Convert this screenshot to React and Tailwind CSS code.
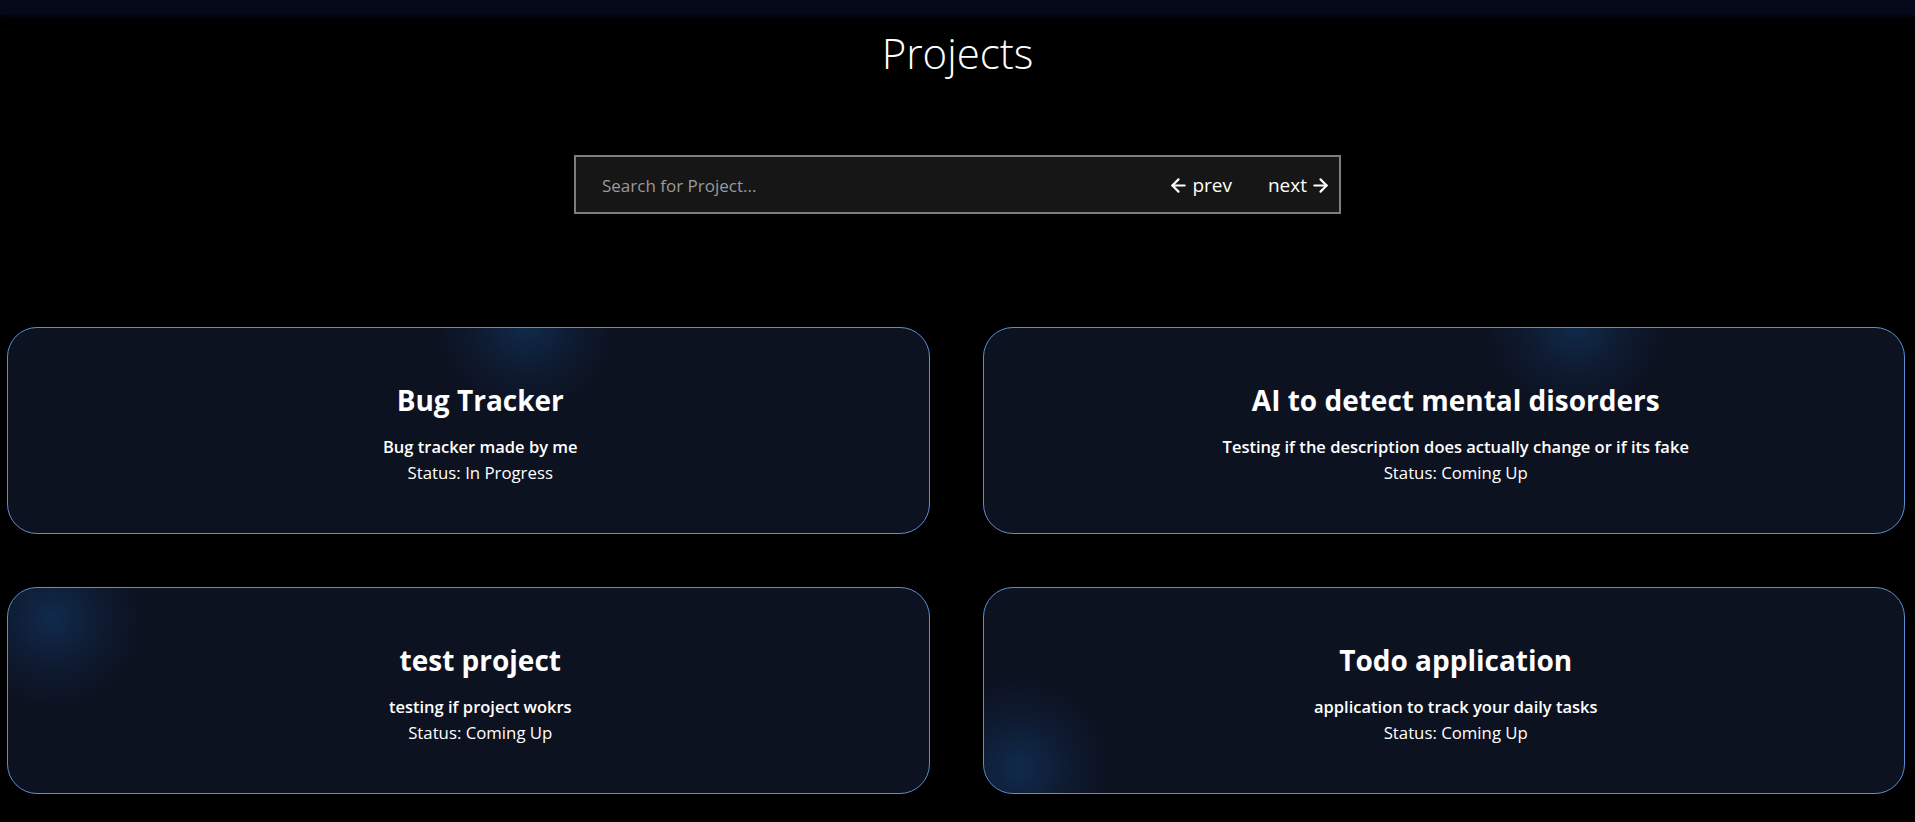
import { ArrowLeft, ArrowRight } from "lucide-react";

const projects = [
  {
    id: 1,
    name: "Bug Tracker",
    description: "Bug tracker made by me",
    status: "In Progress",
    glow: "left-[428px] -top-[95px]",
  },
  {
    id: 2,
    name: "AI to detect mental disorders",
    description: "Testing if the description does actually change or if its fake",
    status: "Coming Up",
    glow: "left-[502px] -top-[95px]",
  },
  {
    id: 3,
    name: "test project",
    description: "testing if project wokrs",
    status: "Coming Up",
    glow: "-left-[45px] -top-[60px]",
  },
  {
    id: 4,
    name: "Todo application",
    description: "application to track your daily tasks",
    status: "Coming Up",
    glow: "-left-[55px] top-[90px]",
  },
];

function ProjectCard({ project }) {
  return (
    <div className="relative h-[207px] overflow-hidden rounded-[30px] border border-[#5b8fd3] bg-[#0d1221]">
      <div
        className={`pointer-events-none absolute h-[180px] w-[180px] rounded-full bg-[radial-gradient(circle,rgba(20,72,130,0.45)_0%,rgba(20,72,130,0.15)_40%,rgba(13,18,33,0)_70%)] ${project.glow}`}
      />
      <div className="relative flex h-full flex-col items-center justify-center pl-6 pt-[8px] text-center text-white">
        <h2 className="text-[28px] font-bold leading-tight">{project.name}</h2>
        <p className="mt-[16px] text-[16.5px] font-semibold leading-[26px]">{project.description}</p>
        <p className="text-[16.8px] leading-[26px]">Status: {project.status}</p>
      </div>
    </div>
  );
}

export default function App() {
  return (
    <div className="min-h-screen bg-black font-['Open_Sans',sans-serif] text-white">
      <div className="h-[15px] bg-[#050818] shadow-[0_2px_4px_rgba(5,8,24,0.8)]" />

      <h1 className="mt-[12px] text-center text-[42px] font-light leading-[52px]">Projects</h1>

      <div className="mx-auto mt-[76px] flex h-[59px] w-[767px] items-center border-2 border-[#7d7d7d] bg-[#161616] pl-[26px] pr-[8px] pt-[2px]">
        <input
          type="text"
          placeholder="Search for Project..."
          className="flex-1 bg-transparent text-[17px] text-white outline-none placeholder:text-[#9a9a9a]"
        />
        <button className="flex items-center gap-[3px] text-[19px] font-medium text-white">
          <ArrowLeft size={21} strokeWidth={2.5} />
          prev
        </button>
        <button className="ml-[36px] flex items-center gap-[3px] text-[19px] font-medium text-white">
          next
          <ArrowRight size={21} strokeWidth={2.5} />
        </button>
      </div>

      <div className="mt-[113px] grid grid-cols-2 gap-x-[53px] gap-y-[53px] pl-[7px] pr-[10px]">
        {projects.map((p) => (
          <ProjectCard key={p.id} project={p} />
        ))}
      </div>
    </div>
  );
}
